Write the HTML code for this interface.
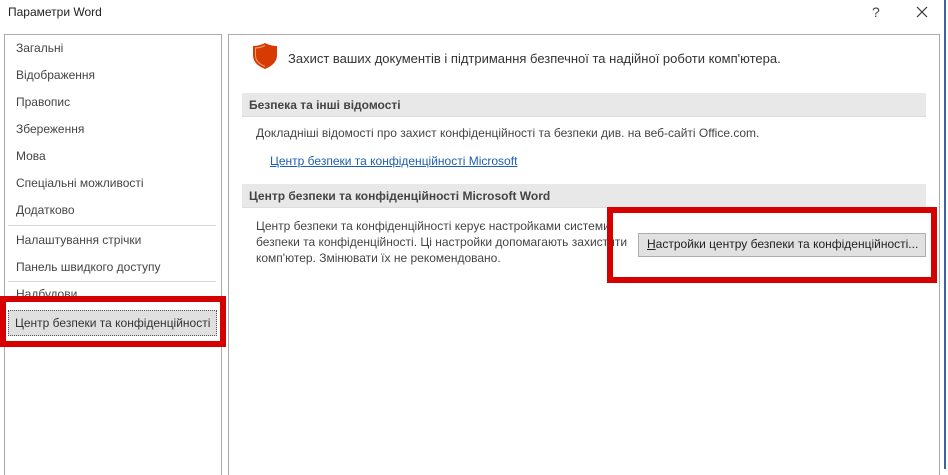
<!DOCTYPE html>
<html><head><meta charset="utf-8"><style>
body{margin:0;width:948px;height:469px;background:#fff;position:relative;overflow:hidden;font-family:"Liberation Sans","DejaVu Sans",sans-serif;font-size:12px;color:#444}
.a{position:absolute;white-space:nowrap}
.side{position:absolute;left:4px;top:34px;width:216px;height:440px;border:1px solid #ababab;border-bottom:none}
.main{position:absolute;left:228px;top:34px;width:710px;height:440px;border:1px solid #ababab;border-bottom:none}
.it{position:absolute;left:16px;font-size:12px;color:#444}
.sep{position:absolute;left:8px;width:208px;height:1px;background:#d5d5d5}
.hdr{position:absolute;left:242px;width:684px;height:23px;background:#e8e8e8;border-bottom:1px solid #ddd}
.hdr span{position:absolute;left:7px;top:5px;font-weight:bold;color:#444;font-size:12px}
.red{position:absolute;border:6px solid #d50000}
</style></head><body>
<div class="a" style="left:8px;top:5px;font-size:12px;color:#222">Параметри Word</div>
<div class="a" style="left:872px;top:4px;font-size:14px;color:#444">?</div>
<svg class="a" style="left:916px;top:6px" width="12" height="12"><path d="M1 1L11 11M11 1L1 11" stroke="#333" stroke-width="1.2"/></svg>
<div class="a" style="left:944px;top:0;width:2px;height:469px;background:#3b64a8"></div>
<div class="side"></div>
<div class="main"></div>
<div class="it" style="top:41px">Загальні</div>
<div class="it" style="top:68px">Відображення</div>
<div class="it" style="top:95px">Правопис</div>
<div class="it" style="top:122px">Збереження</div>
<div class="it" style="top:149px">Мова</div>
<div class="it" style="top:176px">Спеціальні можливості</div>
<div class="it" style="top:203px">Додатково</div>
<div class="sep" style="top:225px"></div>
<div class="it" style="top:233px">Налаштування стрічки</div>
<div class="it" style="top:260px">Панель швидкого доступу</div>
<div class="sep" style="top:281px"></div>
<div class="it" style="top:287px">Надбудови</div>
<div class="a" style="left:8px;top:310px;width:207px;height:24px;background:#e0e0e0;border:1px dotted #555"></div>
<div class="a" style="left:15px;top:316px;color:#333">Центр безпеки та конфіденційності</div>
<div class="red" style="left:0;top:296px;width:214px;height:39px"></div>
<svg class="a" style="left:252px;top:42px" width="26" height="28" viewBox="0 0 26 28"><path d="M13 1C9 3 5 4 1 4V13C1 20 6 24 13 27C20 24 25 20 25 13V4C21 4 17 3 13 1Z" fill="#d83b01"/><path d="M13 3.5C10 5 7 6 3.5 6V13C3.5 19 7.5 22 13 24.5" fill="none" stroke="#f3a380" stroke-width="1"/></svg>
<div class="a" style="left:288px;top:51px;font-size:13px;color:#333">Захист ваших документів і підтримання безпечної та надійної роботи комп'ютера.</div>
<div class="hdr" style="top:93px"><span>Безпека та інші відомості</span></div>
<div class="a" style="left:256px;top:126px">Докладніші відомості про захист конфіденційності та безпеки див. на веб-сайті Office.com.</div>
<div class="a" style="left:270px;top:154px;color:#1e5fae;text-decoration:underline">Центр безпеки та конфіденційності Microsoft</div>
<div class="hdr" style="top:184px"><span>Центр безпеки та конфіденційності Microsoft Word</span></div>
<div class="a" style="left:256px;top:218px;line-height:16px">Центр безпеки та конфіденційності керує настройками системи<br>безпеки та конфіденційності. Ці настройки допомагають захистити<br>комп'ютер. Змінювати їх не рекомендовано.</div>
<div class="a" style="left:638px;top:233px;width:286px;height:22px;background:#e1e1e1;border:1px solid #adadad"></div>
<div class="a" style="left:647px;top:237px;color:#222"><u>Н</u>астройки центру безпеки та конфіденційності...</div>
<div class="red" style="left:607px;top:207px;width:318px;height:64px"></div>
</body></html>
